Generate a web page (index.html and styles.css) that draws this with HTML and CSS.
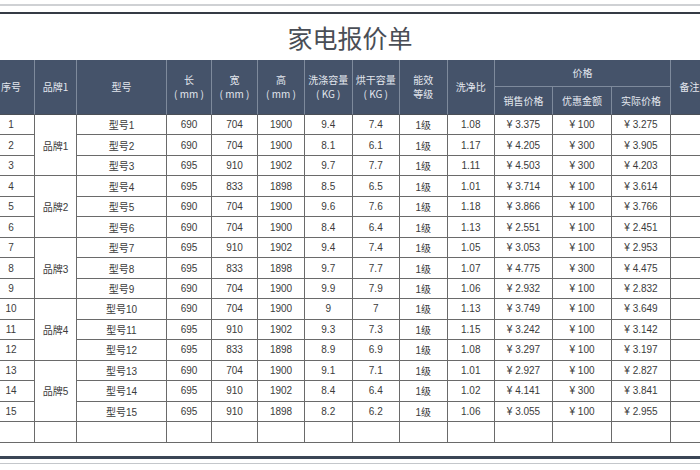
FILE: index.html
```html
<!DOCTYPE html>
<html lang="zh">
<head>
<meta charset="utf-8">
<link rel="stylesheet" href="styles.css">
</head>
<body>
<div class="page">
  <div class="rule-light top"></div>
  <div class="rule-dark top"></div>
  <h1 class="title">家电报价单</h1>
  <div class="sheet">
    <table class="quote">
      <colgroup>
        <col class="w-no"><col class="w-brand"><col class="w-model"><col class="w-dim"><col class="w-dim2"><col class="w-dim3">
        <col class="w-cap"><col class="w-cap"><col class="w-cap"><col class="w-cap"><col class="w-price"><col class="w-price2"><col class="w-price2"><col class="w-note">
      </colgroup>
      <thead>
        <tr class="h1">
          <th rowspan="2">序号</th>
          <th rowspan="2">品牌1</th>
          <th rowspan="2">型号</th>
          <th rowspan="2">长<br>( mm )</th>
          <th rowspan="2">宽<br>( mm )</th>
          <th rowspan="2">高<br>( mm )</th>
          <th rowspan="2">洗涤容量<br>( KG )</th>
          <th rowspan="2">烘干容量<br>( KG )</th>
          <th rowspan="2">能效<br>等级</th>
          <th rowspan="2">洗净比</th>
          <th colspan="3">价格</th>
          <th rowspan="2" class="note">备注</th>
        </tr>
        <tr class="h2">
          <th>销售价格</th>
          <th>优惠金额</th>
          <th>实际价格</th>
        </tr>
      </thead>
      <tbody>
        <tr><td>1</td><td rowspan="3">品牌1</td><td>型号1</td><td>690</td><td>704</td><td>1900</td><td>9.4</td><td>7.4</td><td>1级</td><td>1.08</td><td>¥ 3.375</td><td>¥ 100</td><td>¥ 3.275</td><td></td></tr>
        <tr><td>2</td><td>型号2</td><td>690</td><td>704</td><td>1900</td><td>8.1</td><td>6.1</td><td>1级</td><td>1.17</td><td>¥ 4.205</td><td>¥ 300</td><td>¥ 3.905</td><td></td></tr>
        <tr><td>3</td><td>型号3</td><td>695</td><td>910</td><td>1902</td><td>9.7</td><td>7.7</td><td>1级</td><td>1.11</td><td>¥ 4.503</td><td>¥ 300</td><td>¥ 4.203</td><td></td></tr>
        <tr><td>4</td><td rowspan="3">品牌2</td><td>型号4</td><td>695</td><td>833</td><td>1898</td><td>8.5</td><td>6.5</td><td>1级</td><td>1.01</td><td>¥ 3.714</td><td>¥ 100</td><td>¥ 3.614</td><td></td></tr>
        <tr><td>5</td><td>型号5</td><td>690</td><td>704</td><td>1900</td><td>9.6</td><td>7.6</td><td>1级</td><td>1.18</td><td>¥ 3.866</td><td>¥ 100</td><td>¥ 3.766</td><td></td></tr>
        <tr><td>6</td><td>型号6</td><td>690</td><td>704</td><td>1900</td><td>8.4</td><td>6.4</td><td>1级</td><td>1.13</td><td>¥ 2.551</td><td>¥ 100</td><td>¥ 2.451</td><td></td></tr>
        <tr><td>7</td><td rowspan="3">品牌3</td><td>型号7</td><td>695</td><td>910</td><td>1902</td><td>9.4</td><td>7.4</td><td>1级</td><td>1.05</td><td>¥ 3.053</td><td>¥ 100</td><td>¥ 2.953</td><td></td></tr>
        <tr><td>8</td><td>型号8</td><td>695</td><td>833</td><td>1898</td><td>9.7</td><td>7.7</td><td>1级</td><td>1.07</td><td>¥ 4.775</td><td>¥ 300</td><td>¥ 4.475</td><td></td></tr>
        <tr><td>9</td><td>型号9</td><td>690</td><td>704</td><td>1900</td><td>9.9</td><td>7.9</td><td>1级</td><td>1.06</td><td>¥ 2.932</td><td>¥ 100</td><td>¥ 2.832</td><td></td></tr>
        <tr><td>10</td><td rowspan="3">品牌4</td><td>型号10</td><td>690</td><td>704</td><td>1900</td><td>9</td><td>7</td><td>1级</td><td>1.13</td><td>¥ 3.749</td><td>¥ 100</td><td>¥ 3.649</td><td></td></tr>
        <tr><td>11</td><td>型号11</td><td>695</td><td>910</td><td>1902</td><td>9.3</td><td>7.3</td><td>1级</td><td>1.15</td><td>¥ 3.242</td><td>¥ 100</td><td>¥ 3.142</td><td></td></tr>
        <tr><td>12</td><td>型号12</td><td>695</td><td>833</td><td>1898</td><td>8.9</td><td>6.9</td><td>1级</td><td>1.08</td><td>¥ 3.297</td><td>¥ 100</td><td>¥ 3.197</td><td></td></tr>
        <tr><td>13</td><td rowspan="3">品牌5</td><td>型号13</td><td>690</td><td>704</td><td>1900</td><td>9.1</td><td>7.1</td><td>1级</td><td>1.01</td><td>¥ 2.927</td><td>¥ 100</td><td>¥ 2.827</td><td></td></tr>
        <tr><td>14</td><td>型号14</td><td>695</td><td>910</td><td>1902</td><td>8.4</td><td>6.4</td><td>1级</td><td>1.02</td><td>¥ 4.141</td><td>¥ 300</td><td>¥ 3.841</td><td></td></tr>
        <tr><td>15</td><td>型号15</td><td>695</td><td>910</td><td>1898</td><td>8.2</td><td>6.2</td><td>1级</td><td>1.06</td><td>¥ 3.055</td><td>¥ 100</td><td>¥ 2.955</td><td></td></tr>
        <tr class="empty"><td></td><td></td><td></td><td></td><td></td><td></td><td></td><td></td><td></td><td></td><td></td><td></td><td></td><td></td></tr>
      </tbody>
    </table>
  </div>
  <div class="rule-dark bottom"></div>
  <div class="rule-light bottom"></div>
</div>
</body>
</html>
```

FILE: styles.css
```css
* { box-sizing: border-box; }
html, body { margin: 0; padding: 0; background: #ffffff; }
body {
  width: 700px;
  height: 470px;
  overflow: hidden;
  font-family: "Noto Sans CJK SC", "Noto Sans", sans-serif;
}
.page { width: 700px; padding-top: 4px; }
.rule-light { height: 2px; background: #cfd1d4; }
.rule-dark { height: 2px; background: #353b45; }
.rule-dark.top { margin-top: 6px; }
.title {
  margin: 0;
  height: 46px;
  line-height: 46px;
  text-align: center;
  font-size: 25px;
  font-weight: 400;
  color: #4a4e56;
}
.sheet { width: 700px; overflow: hidden; }
.quote {
  margin-left: -12px;
  border-collapse: separate;
  border-spacing: 0;
  table-layout: fixed;
  width: 721px;
  font-family: "Liberation Sans", "Noto Sans CJK SC", sans-serif;
}
.w-no { width: 47px; }
.w-brand { width: 42px; }
.w-model { width: 90px; }
.w-dim { width: 45px; }
.w-dim2 { width: 46px; }
.w-dim3 { width: 47px; }
.w-cap { width: 47.5px; }
.w-price { width: 58px; }
.w-price2 { width: 59px; }
.w-note { width: 38px; }
.quote th {
  background: #45536a;
  color: #e3e7ee;
  font-weight: 400;
  font-size: 10px;
  line-height: 14px;
  padding: 0;
  text-align: center;
  border-right: 1px solid #7e8a9c;
  border-bottom: 1px solid #7e8a9c;
  font-family: "Noto Sans CJK SC", "Liberation Sans", sans-serif;
  white-space: nowrap;
}
.quote th.note { overflow: hidden; }
.quote thead tr.h1 { height: 27px; }
.quote thead tr.h2 { height: 28px; }
.quote thead tr.h2 th, .quote thead tr.h1 th[rowspan] { border-bottom-color: #4a4f57; }
.quote td {
  height: 20.47px;
  padding: 0;
  text-align: center;
  font-size: 10px;
  color: #3b3b3b;
  border-right: 1px solid #6a6a6a;
  border-bottom: 1px solid #6a6a6a;
  white-space: nowrap;
}
.quote tr.empty td { height: 21px; }
.rule-dark.bottom { height: 3px; margin-top: 13px; background: #3b4656; }
.rule-light.bottom { margin-top: 4px; height: 1px; background: #c4c7cb; }
```
